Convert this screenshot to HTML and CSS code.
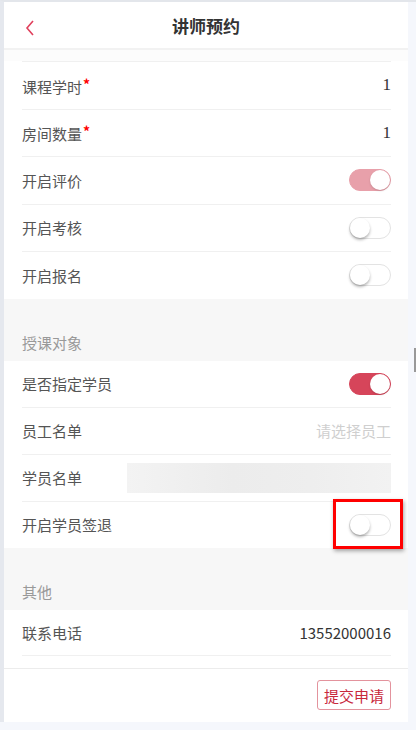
FILE: index.html
```html
<!DOCTYPE html>
<html lang="zh-CN">
<head>
    <meta charset="UTF-8">
    <meta name="viewport" content="width=device-width, initial-scale=1.0">
    <title>讲师预约</title>
    <link rel="stylesheet" href="styles.css">
</head>
<body>
    <div class="page">
        <header class="topbar">
            <span class="back">
                <svg width="10" height="16" viewBox="0 0 10 16"><polyline points="8,1 2,8 8,15" fill="none" stroke="#e0405c" stroke-width="1.6"/></svg>
            </span>
            <h1>讲师预约</h1>
        </header>
        <div class="gap"></div>

        <div class="group">
            <div class="row">
                <span class="label">课程学时<i class="req">*</i></span>
                <span class="num">1</span>
            </div>
            <div class="row">
                <span class="label">房间数量<i class="req">*</i></span>
                <span class="num">1</span>
            </div>
            <div class="row">
                <span class="label">开启评价</span>
                <span class="switch on dim"></span>
            </div>
            <div class="row">
                <span class="label">开启考核</span>
                <span class="switch"></span>
            </div>
            <div class="row">
                <span class="label">开启报名</span>
                <span class="switch"></span>
            </div>
        </div>

        <div class="section">授课对象</div>
        <div class="group tight">
            <div class="row">
                <span class="label">是否指定学员</span>
                <span class="switch on"></span>
            </div>
            <div class="row">
                <span class="label">员工名单</span>
                <span class="placeholder">请选择员工</span>
            </div>
            <div class="row">
                <span class="label">学员名单</span>
                <span class="blurred"></span>
            </div>
            <div class="row">
                <span class="label">开启学员签退</span>
                <span class="switch"></span>
            </div>
        </div>

        <div class="section">其他</div>
        <div class="group pad">
            <div class="row">
                <span class="label">联系电话</span>
                <span class="value">13552000016</span>
            </div>
        </div>

        <footer class="bottom">
            <button type="button" class="submit">提交申请</button>
        </footer>

        <div class="mark"></div>
    </div>
    <div class="thumb"></div>
</body>
</html>
```

FILE: styles.css
```css
* {
    box-sizing: border-box;
}

body {
    margin: 0;
    background-color: #f5f7fc;
    border-top: 2px solid #e3e6eb;
    border-left: 4px solid #e5e8ee;
    font-family: "Noto Sans CJK SC", "Noto Sans", sans-serif;
    color: #555;
}

.page {
    position: relative;
    width: 404px;
    height: 720px;
    background-color: #fff;
}

.topbar {
    height: 48px;
    display: flex;
    align-items: center;
    justify-content: center;
    position: relative;
    border-bottom: 2px solid #f2f2f2;
}

.topbar h1 {
    margin: 0;
    font-size: 17px;
    font-weight: bold;
    color: #333;
}

.back {
    position: absolute;
    left: 21px;
    top: 18px;
    line-height: 0;
}

.gap {
    height: 11px;
    background-color: #fcfcfc;
}

.group {
    background-color: #fff;
    padding: 0 17px 0 18px;
}

.row {
    height: 47.5px;
    display: flex;
    align-items: center;
    justify-content: space-between;
    border-top: 1px solid #f0f0f0;
}

.section + .group .row:first-child {
    border-top: none;
}

.group.tight .row {
    height: 47px;
}

.group.tight .row:first-child {
    height: 46px;
}

.group.pad {
    padding-bottom: 12px;
    border-bottom: 1px solid #ececec;
}

.group.pad .row {
    border-top: none;
    border-bottom: 1px solid #f0f0f0;
    height: 46px;
}

.label {
    font-size: 15px;
    color: #555;
}

.req {
    font-style: normal;
    font-weight: bold;
    color: #f00;
    font-size: 14px;
    vertical-align: 3px;
    margin-left: 1px;
}

.num {
    font-family: "Liberation Serif", serif;
    font-size: 17px;
    color: #333;
}

.value {
    font-size: 15px;
    color: #333;
}

.placeholder {
    font-size: 15px;
    color: #cfcfcf;
}

.blurred {
    width: 264px;
    height: 30px;
    background: linear-gradient(90deg, #f3f3f3, #ececec 40%, #eeeeee 70%, #f2f2f2);
}

.switch {
    position: relative;
    width: 42px;
    height: 22px;
    border-radius: 11px;
    border: 1px solid #e3e3e3;
    background-color: #fff;
}

.switch::after {
    content: "";
    position: absolute;
    top: 0;
    left: 0;
    width: 20px;
    height: 20px;
    border-radius: 50%;
    background-color: #fff;
    box-shadow: 0 2px 3px rgba(0, 0, 0, 0.3);
}

.switch.on {
    background-color: #d6455a;
    border-color: #d6455a;
}

.switch.on.dim {
    background-color: #e8a0aa;
    border-color: #e8a0aa;
}

.switch.on::after {
    left: auto;
    right: 0;
    box-shadow: 0 1px 2px rgba(0, 0, 0, 0.15);
}

.section {
    height: 62px;
    background-color: #f7f7f7;
    padding: 0 18px 8px;
    display: flex;
    align-items: flex-end;
    font-size: 15px;
    color: #999;
}

.bottom {
    height: 53px;
    display: flex;
    align-items: center;
    justify-content: flex-end;
    padding-right: 17px;
}

.submit {
    height: 30px;
    padding: 0 6px;
    border: 1px solid #e3939d;
    border-radius: 3px;
    background-color: #fff;
    color: #c8283c;
    font-family: "Noto Sans CJK SC", sans-serif;
    font-size: 15px;
    cursor: pointer;
}

.mark {
    position: absolute;
    left: 329px;
    top: 497px;
    width: 70px;
    height: 50px;
    border: 3px solid #f00;
    box-shadow: 1px 2px 4px rgba(0, 0, 0, 0.35);
}

.thumb {
    position: absolute;
    left: 414px;
    top: 348px;
    width: 2px;
    height: 24px;
    background-color: #999;
}
```
